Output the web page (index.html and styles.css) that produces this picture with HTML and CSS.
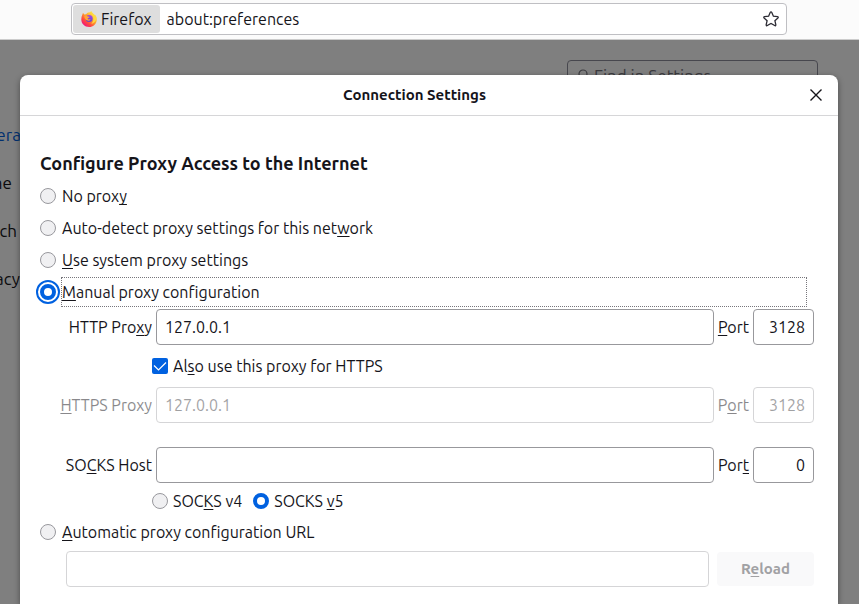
FILE: index.html
```html
<!DOCTYPE html>
<html lang="en">
<head>
<meta charset="utf-8">
<title>Settings</title>
<link rel="stylesheet" href="styles.css">
</head>
<body>
<header class="toolbar">
  <div class="urlbar">
    <button class="identity" type="button">
      <svg class="logo" viewBox="0 0 16 16" aria-hidden="true">
        <defs>
          <linearGradient id="flame" x1="0.85" y1="0.1" x2="0.2" y2="0.9">
            <stop offset="0" stop-color="#fff44f"/>
            <stop offset="0.45" stop-color="#ffa02a"/>
            <stop offset="0.75" stop-color="#ff4a3f"/>
            <stop offset="1" stop-color="#f0197b"/>
          </linearGradient>
          <linearGradient id="globe" x1="0.7" y1="0" x2="0.3" y2="1">
            <stop offset="0" stop-color="#a34ae8"/>
            <stop offset="1" stop-color="#5a43c8"/>
          </linearGradient>
        </defs>
        <path fill="url(#flame)" d="M1.500 3.200 2 1.700l1.200 1.800 1.800-.2C6 2 7 1.500 8.200 1.300 9 1.500 9.200 1 10.200 0c.5 1.700 2 2.200 3 3.500.5.400.7.800.8 1.400.2-.2.200-.5.200-.9 1.300 1.700 1.800 3.700 1.500 5.700C15.100 13.300 12 16 8.100 16 3.700 16 .3 12.700.3 8.500.3 6.500.7 4.700 1.500 3.200z"/>
        <circle cx="8.200" cy="7.600" r="3.500" fill="url(#globe)"/>
        <path fill="#ffa436" d="M3.200 4.800C4.500 4.200 6 4.600 6.800 5.500l1.700.2c0 .8-.6 1.100-1.500 1.400-.4.500-.2 1 .5 1.300.8.200 1.300-.3 2 0-.5 1-1.700 1.500-2.900 1.200C4.700 9.300 3.200 7.400 3.200 4.800z"/>
        <path fill="#ffd93f" d="M10.200 0c.1 3 2.300 4.400 2.300 7.700 0 2.300-1 4-2.200 5 3.600-.7 5.500-3.700 5-6.500-.2-.9-.6-1.700-1.100-2.300 0 .4 0 .7-.2.900C13.400 3 10.900 2.500 10.200 0z"/>
      </svg>
      <span>Firefox</span>
    </button>
    <input class="address" type="text" value="about:preferences" aria-label="Address">
    <button class="bookmark" type="button" aria-label="Bookmark this page">
      <svg viewBox="0 0 16 16" aria-hidden="true"><path d="M8 .9c.4 0 .6.200.8.600l1.600 3.700 4 .4c.9.100 1.100.8.500 1.400l-3 2.700.9 4c.2.900-.4 1.300-1.100.8L8 12.400l-3.700 2.100c-.7.500-1.300.1-1.100-.8l.9-4-3-2.700c-.6-.6-.4-1.300.5-1.400l4-.4L7.200 1.500C7.400 1.100 7.600.9 8 .9z"/></svg>
    </button>
  </div>
</header>

<main class="page">
  <nav class="categories">
    <a class="current" href="#general">General</a>
    <a href="#home">Home</a>
    <a href="#search">Search</a>
    <a href="#privacy">Privacy</a>
  </nav>
  <label class="finder">
    <svg viewBox="0 0 16 16" aria-hidden="true"><circle cx="7" cy="6" r="4"/><path d="m10 9 4 4"/></svg>
    <input type="search" placeholder="Find in Settings" aria-label="Find in Settings">
  </label>

  <div class="overlay">
    <section class="dialog" role="dialog" aria-labelledby="dialog-title">
      <header class="titlebar">
        <h1 id="dialog-title">Connection Settings</h1>
        <button class="close" type="button" aria-label="Close">
          <svg viewBox="0 0 14 14" aria-hidden="true"><path d="m1.500 1.500 11 11m0-11-11 11"/></svg>
        </button>
      </header>
      <form class="settings">
        <h2>Configure Proxy Access to the Internet</h2>
        <div class="choice">
          <input type="radio" name="mode" id="mode-none">
          <label for="mode-none">No prox<u>y</u></label>
        </div>
        <div class="choice">
          <input type="radio" name="mode" id="mode-detect">
          <label for="mode-detect">Auto-detect proxy settings for this net<u>w</u>ork</label>
        </div>
        <div class="choice">
          <input type="radio" name="mode" id="mode-system">
          <label for="mode-system"><u>U</u>se system proxy settings</label>
        </div>
        <div class="choice focused">
          <input type="radio" name="mode" id="mode-manual" checked>
          <label for="mode-manual"><u>M</u>anual proxy configuration</label>
        </div>

        <div class="servers">
          <label for="http">HTTP Pro<u>x</u>y</label>
          <input class="field" type="text" id="http" value="127.0.0.1">
          <label for="http-port"><u>P</u>ort</label>
          <input class="field port" type="text" id="http-port" value="3128">

          <div class="option">
            <span class="tick">
              <input type="checkbox" id="share" checked>
              <svg viewBox="0 0 16 16" aria-hidden="true"><path d="m2 7.500 4.500 4.500L14 4.500"/></svg>
            </span>
            <label for="share">Al<u>s</u>o use this proxy for HTTPS</label>
          </div>

          <label class="dimmed" for="https"><u>H</u>TTPS Proxy</label>
          <input class="field" type="text" id="https" value="127.0.0.1" disabled>
          <label class="dimmed" for="https-port">P<u>o</u>rt</label>
          <input class="field port" type="text" id="https-port" value="3128" disabled>

          <div class="spacer"></div>

          <label for="socks">SO<u>C</u>KS Host</label>
          <input class="field" type="text" id="socks">
          <label for="socks-port">Por<u>t</u></label>
          <input class="field port" type="text" id="socks-port" value="0">

          <div class="option versions">
            <input type="radio" name="version" id="v4">
            <label for="v4">SOC<u>K</u>S v4</label>
            <input type="radio" name="version" id="v5" checked>
            <label for="v5">SOCKS <u>v</u>5</label>
          </div>
        </div>

        <div class="choice automatic">
          <input type="radio" name="mode" id="mode-auto">
          <label for="mode-auto"><u>A</u>utomatic proxy configuration URL</label>
        </div>
        <div class="auto-url">
          <input class="field" type="text" aria-label="Automatic proxy configuration URL" disabled>
          <button type="button" disabled>R<u>e</u>load</button>
        </div>
      </form>
    </section>
  </div>
</main>
</body>
</html>
```
FILE: styles.css
```css
* {
  box-sizing: border-box;
}

body {
  margin: 0;
  height: 100vh;
  display: flex;
  flex-direction: column;
  overflow: hidden;
  background: #fff;
  color: #15141a;
  font: 16px/20px Ubuntu, "Noto Sans", sans-serif;
}

input,
button {
  margin: 0;
  font: inherit;
  color: inherit;
}

button {
  border: 0;
  padding: 0;
  background: none;
}

u {
  text-decoration: underline 1px;
  text-underline-offset: 2px;
  text-decoration-skip-ink: none;
}

/* Toolbar */
.toolbar {
  height: 40px;
  flex: none;
  padding: 3px 72px 4px 71px;
  background: #fbfbfb;
  border-bottom: 1px solid #ccc;
}

.urlbar {
  height: 32px;
  display: flex;
  align-items: center;
  padding: 1px;
  background: #fff;
  border: 1px solid #bfbfc3;
  border-radius: 4px;
}

.identity {
  height: 28px;
  display: flex;
  align-items: center;
  gap: 4px;
  padding: 0 8px;
  background: #dedede;
  border-radius: 3px;
}

.logo {
  width: 16px;
  height: 16px;
}

.address {
  flex: 1;
  min-width: 0;
  border: 0;
  padding: 0 7px;
  background: none;
  outline: 0;
}

.bookmark {
  display: flex;
  padding: 0 6px;
}

.bookmark svg {
  width: 16px;
  height: 16px;
  fill: none;
  stroke: #2b2a33;
  stroke-width: 1.3;
}

/* Page under the dialog */
.page {
  flex: 1;
  position: relative;
  display: flex;
  justify-content: space-between;
  align-items: flex-start;
  padding: 20px 41px 0 0;
  font-size: 17px;
}

.categories {
  display: flex;
  flex-direction: column;
  gap: 28px;
  margin: 65px 0 0 -34px;
}

.categories a {
  color: #15141a;
  text-decoration: none;
}

.categories .current {
  color: #0061e0;
}

.finder {
  width: 251px;
  height: 32px;
  display: flex;
  align-items: center;
  gap: 2px;
  padding: 0 8px;
  border: 1px solid #8f8f9d;
  border-radius: 4px;
}

.finder svg {
  width: 16px;
  height: 16px;
  flex: none;
  fill: none;
  stroke: #77767e;
  stroke-width: 1.2;
}

.finder input {
  flex: 1;
  min-width: 0;
  border: 0;
  padding: 0;
  background: none;
}

.finder input::placeholder {
  color: #77767e;
}

/* Dialog */
.overlay {
  position: absolute;
  inset: 0;
  padding: 35px 21px 0 20px;
  background: rgba(0, 0, 0, 0.5);
  font-size: 16px;
}

.dialog {
  min-height: 100%;
  background: #fff;
  border-radius: 8px 8px 0 0;
  box-shadow: 0 2px 6px rgba(0, 0, 0, 0.4);
}

.titlebar {
  height: 41px;
  display: flex;
  align-items: center;
  padding-right: 15px;
  border-bottom: 1px solid #d6d6d8;
}

.titlebar h1 {
  flex: 1;
  margin: 0;
  text-align: center;
  font-size: 15px;
  font-weight: 700;
}

.close {
  display: flex;
}

.close svg {
  width: 14px;
  height: 14px;
  fill: none;
  stroke: #15141a;
  stroke-width: 1.4;
}

.settings {
  padding: 35px 24px 16px 20px;
}

.settings h2 {
  margin: 0 0 5px;
  font-size: 18px;
  line-height: 24px;
  font-weight: 700;
}

input[type="radio"],
input[type="checkbox"] {
  appearance: none;
  flex: none;
  width: 16px;
  height: 16px;
  border: 1px solid #98989d;
  background: #f0f0f2;
}

input[type="radio"] {
  border-radius: 50%;
}

input[type="radio"]:checked {
  border: 4px solid #0061e0;
  background: #fff;
}

.choice {
  height: 32px;
  display: flex;
  align-items: center;
  gap: 5px;
  padding-right: 7px;
}

.choice label {
  flex: 1;
  padding: 4px 0;
  border: 1px dotted transparent;
}

.choice.focused input {
  outline: 2px solid #0061e0;
  outline-offset: 2px;
}

.choice.focused label {
  border-color: #77767c;
}

.servers {
  display: grid;
  grid-template-columns: 112px 1fr auto 61px;
  column-gap: 4px;
  align-items: center;
  margin-top: 1px;
}

.servers > label {
  text-align: right;
}

.dimmed {
  opacity: 0.5;
}

.field {
  width: 100%;
  min-width: 0;
  height: 36px;
  padding: 0 8px;
  border: 1px solid #98989c;
  border-radius: 4px;
  background: #fff;
}

.field:disabled {
  opacity: 0.4;
}

.port {
  text-align: right;
}

.option {
  grid-column: 1 / -1;
  height: 42px;
  display: flex;
  align-items: center;
  gap: 5px;
  padding-left: 112px;
}

.versions {
  height: 36px;
}

.versions label + input {
  margin-left: 6px;
}

.tick {
  display: grid;
}

.tick > * {
  grid-area: 1 / 1;
}

.tick input:checked {
  border: 0;
  border-radius: 2px;
  background: #0061e0;
}

.tick svg {
  width: 16px;
  height: 16px;
  fill: none;
  stroke: #fff;
  stroke-width: 1.2;
  pointer-events: none;
}

.spacer {
  grid-column: 1 / -1;
  height: 24px;
}

.automatic {
  height: 26px;
}

.auto-url {
  display: flex;
  align-items: center;
  gap: 8px;
  margin-top: 6px;
  padding-left: 26px;
}

.auto-url .field {
  flex: 1;
}

.auto-url button {
  width: 97px;
  height: 34px;
  border-radius: 4px;
  background: #f9f9fa;
  color: #a1a1a4;
  font-size: 15px;
  font-weight: 700;
}
```
